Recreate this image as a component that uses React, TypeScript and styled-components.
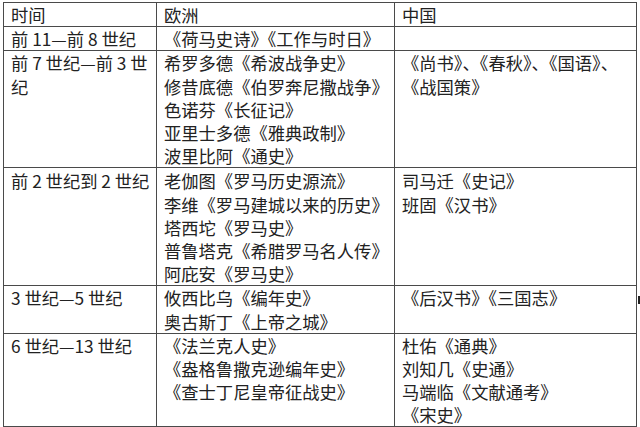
import styled, { createGlobalStyle } from "styled-components";

const GlobalStyle = createGlobalStyle`
    body {
        margin: 0;
        background: #ffffff;
        font-family: "Noto Sans CJK SC", "Noto Sans", sans-serif;
        color: #222222;
    }
`;

const Page = styled.div`
    padding: 2px 0 0 3px;
`;

const Table = styled.table`
    width: 633px;
    border-collapse: collapse;
    table-layout: fixed;
    font-size: 17.3px;
    line-height: 23.2px;
`;

const Row = styled.tr<{ $h: number }>`
    height: ${(props) => props.$h}px;
`;

const Cell = styled.td<{ $mid?: boolean; $top?: number; $lh?: number }>`
    border: 1px solid #4a4a4a;
    padding: ${(props) => props.$top ?? 0}px 7px 0 7px;
    vertical-align: ${(props) => (props.$mid ? "middle" : "top")};
    line-height: ${(props) => (props.$lh ? `${props.$lh}px` : "inherit")};
    position: relative;
`;

const Line = styled.div`
    white-space: nowrap;
`;

const Mark = styled.span`
    position: absolute;
    right: -4px;
    top: 10px;
    width: 2px;
    height: 8px;
    background: #222;
`;

type Period = {
    time: string[];
    europe: string[];
    china: string[];
    h: number;
    top?: number;
    chinaLh?: number;
};

const rows: Period[] = [
    {
        time: ["前 11—前 8 世纪"],
        europe: ["《荷马史诗》《工作与时日》"],
        china: [],
        h: 24,
    },
    {
        time: ["前 7 世纪—前 3 世", "纪"],
        europe: [
            "希罗多德《希波战争史》",
            "修昔底德《伯罗奔尼撒战争》",
            "色诺芬《长征记》",
            "亚里士多德《雅典政制》",
            "波里比阿《通史》",
        ],
        china: ["《尚书》、《春秋》、《国语》、", "《战国策》"],
        h: 116,
    },
    {
        time: ["前 2 世纪到 2 世纪"],
        europe: [
            "老伽图《罗马历史源流》",
            "李维《罗马建城以来的历史》",
            "塔西坨《罗马史》",
            "普鲁塔克《希腊罗马名人传》",
            "阿庇安《罗马史》",
        ],
        china: ["司马迁《史记》", "班固《汉书》"],
        h: 117,
        top: 1,
    },
    {
        time: ["3 世纪—5 世纪"],
        europe: ["攸西比乌《编年史》", "奥古斯丁《上帝之城》"],
        china: ["《后汉书》《三国志》"],
        h: 47,
    },
    {
        time: ["6 世纪—13 世纪"],
        europe: ["《法兰克人史》", "《盎格鲁撒克逊编年史》", "《查士丁尼皇帝征战史》"],
        china: ["杜佑《通典》", "刘知几《史通》", "马端临《文献通考》", "《宋史》"],
        h: 91,
        chinaLh: 23,
    },
];

function App() {
    return (
        <Page>
            <GlobalStyle />
            <Table>
                <colgroup>
                    <col style={{ width: 153 }} />
                    <col style={{ width: 238 }} />
                    <col style={{ width: 242 }} />
                </colgroup>
                <tbody>
                    <Row $h={22}>
                        <Cell $mid>时间</Cell>
                        <Cell $mid>欧洲</Cell>
                        <Cell $mid>中国</Cell>
                    </Row>
                    {rows.map((row, i) => (
                        <Row key={i} $h={row.h}>
                            <Cell $mid={row.h < 30} $top={row.top}>
                                {row.time.map((t) => (
                                    <Line key={t}>{t}</Line>
                                ))}
                            </Cell>
                            <Cell $mid={row.h < 30} $top={row.top}>
                                {row.europe.map((t) => (
                                    <Line key={t}>{t}</Line>
                                ))}
                            </Cell>
                            <Cell $mid={row.h < 30} $top={row.top} $lh={row.chinaLh}>
                                {row.china.map((t) => (
                                    <Line key={t}>{t}</Line>
                                ))}
                                {i === 3 && <Mark />}
                            </Cell>
                        </Row>
                    ))}
                </tbody>
            </Table>
        </Page>
    );
}

export default App;
